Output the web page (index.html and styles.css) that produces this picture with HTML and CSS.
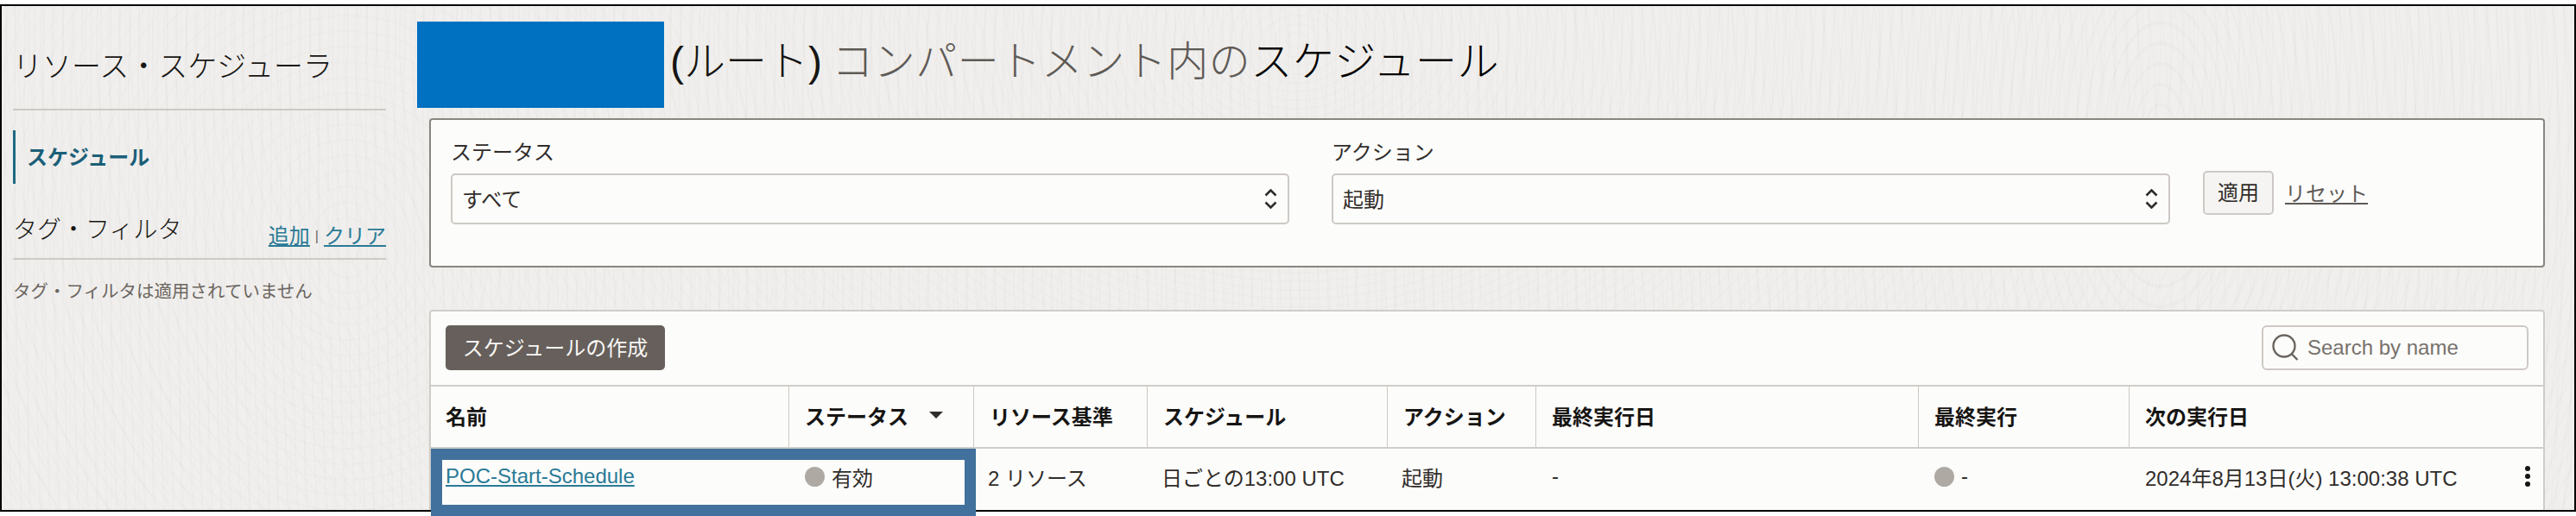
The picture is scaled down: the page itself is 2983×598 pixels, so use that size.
FILE: index.html
```html
<!DOCTYPE html>
<html lang="ja">
<head>
<meta charset="utf-8">
<title>スケジュール</title>
<link rel="stylesheet" href="styles.css">
</head>
<body>
<div class="page">
  <div class="frame">
    <aside class="sidebar">
      <h2 class="side-title">リソース・スケジューラ</h2>
      <nav class="side-nav"><a class="side-link">スケジュール</a></nav>
      <div class="tag-head">
        <h3 class="tag-title">タグ・フィルタ</h3>
        <div class="tag-links"><a class="link">追加</a><span class="sep">|</span><a class="link">クリア</a></div>
      </div>
      <p class="tag-note">タグ・フィルタは適用されていません</p>
    </aside>
    <main class="content">
      <h1 class="heading">
        <span class="redacted"></span>
        <span class="heading-text"><span class="h-dark">(ルート)</span> <span class="h-mid">コンパートメント内の</span><span class="h-black">スケジュール</span></span>
      </h1>
      <section class="filters">
        <div class="field">
          <label class="field-label">ステータス</label>
          <div class="select"><span class="select-value">すべて</span>
            <svg class="updown" width="15" height="23" viewBox="0 0 15 23"><path d="M1.5 7.5 7.5 1.5l6 6M1.5 15.5l6 6 6-6"/></svg>
          </div>
        </div>
        <div class="field">
          <label class="field-label">アクション</label>
          <div class="select"><span class="select-value">起動</span>
            <svg class="updown" width="15" height="23" viewBox="0 0 15 23"><path d="M1.5 7.5 7.5 1.5l6 6M1.5 15.5l6 6 6-6"/></svg>
          </div>
        </div>
        <div class="filter-actions">
          <button class="btn-apply">適用</button>
          <a class="reset">リセット</a>
        </div>
      </section>
      <section class="list">
        <div class="toolbar">
          <button class="btn-create">スケジュールの作成</button>
          <div class="search">
            <svg class="search-icon" width="32" height="32" viewBox="0 0 32 32"><circle cx="14" cy="14" r="12.5"/><path d="M23 23.5l6.5 6.5"/></svg>
            <input class="search-input" type="text" placeholder="Search by name">
          </div>
        </div>
        <table class="table">
          <colgroup>
            <col class="c1"><col class="c2"><col class="c3"><col class="c4"><col class="c5"><col class="c6"><col class="c7"><col class="c8">
          </colgroup>
          <thead>
            <tr>
              <th class="first">名前</th>
              <th><span class="th-sort">ステータス<span class="caret"></span></span></th>
              <th>リソース基準</th>
              <th>スケジュール</th>
              <th>アクション</th>
              <th>最終実行日</th>
              <th>最終実行</th>
              <th class="last">次の実行日</th>
            </tr>
          </thead>
          <tbody>
            <tr>
              <td class="first"><a class="name-link">POC-Start-Schedule</a></td>
              <td><span class="status"><span class="dot"></span>有効</span></td>
              <td class="tight">2 リソース</td>
              <td class="tight">日ごとの13:00 UTC</td>
              <td class="tight">起動</td>
              <td>-</td>
              <td><span class="status"><span class="dot"></span>-</span></td>
              <td class="last"><span class="next-run"><span>2024年8月13日(火) 13:00:38 UTC</span>
                <svg class="kebab" width="6" height="24" viewBox="0 0 6 24"><circle cx="3" cy="3" r="3"/><circle cx="3" cy="12" r="3"/><circle cx="3" cy="21" r="3"/></svg>
              </span></td>
            </tr>
          </tbody>
        </table>
      </section>
    </main>
  </div>
  <div class="callout"></div>
</div>
</body>
</html>
```
FILE: styles.css
```css
* { box-sizing: border-box; }
html, body { margin: 0; padding: 0; background: #fff; }
body {
  width: 2983px;
  height: 598px;
  overflow: hidden;
  font-family: "Liberation Sans", "Noto Sans CJK JP", sans-serif;
  font-size: 24px;
  color: #312d2a;
}
.page { position: relative; width: 2983px; height: 598px; padding-top: 5px; }
.frame {
  display: flex;
  width: 2983px;
  height: 588px;
  border: 2px solid #000;
  overflow: hidden;
  background-color: #f0efed;
  background-image:
    repeating-radial-gradient(ellipse 120px 260px at 2500px 160px, rgba(120,110,100,0) 0 9px, rgba(120,110,100,.028) 9px 11px),
    repeating-radial-gradient(ellipse 200px 240px at 400px 280px, rgba(120,110,100,0) 0 13px, rgba(120,110,100,.02) 13px 15px),
    repeating-radial-gradient(ellipse 260px 200px at 1500px 40px, rgba(120,110,100,0) 0 11px, rgba(120,110,100,.022) 11px 13px),
    repeating-linear-gradient(90deg, rgba(120,110,100,0) 0 14px, rgba(120,110,100,.012) 14px 16px);
}

/* Sidebar */
.sidebar { flex: none; width: 495px; padding: 50px 0 0 13px; }
.side-title {
  width: 432px;
  margin: 0;
  padding-bottom: 29px;
  border-bottom: 2px solid #cdc9c4;
  font-size: 34px;
  line-height: 40px;
  font-weight: 300;
  white-space: nowrap;
  color: #161513;
}
.side-nav { margin-top: 23px; }
.side-link {
  display: flex;
  align-items: center;
  height: 62px;
  padding: 0 0 4px 13px;
  border-left: 3px solid #1f6a82;
  font-size: 24px;
  font-weight: 700;
  color: #1b5f78;
}
.tag-head {
  display: flex;
  justify-content: space-between;
  align-items: flex-end;
  width: 432px;
  height: 56px;
  margin-top: 32px;
  padding-bottom: 9px;
  border-bottom: 2px solid #cdc9c4;
}
.tag-title {
  align-self: flex-start;
  margin: 0;
  font-size: 28px;
  line-height: 44px;
  font-weight: 300;
  color: #161513;
}
.tag-links { display: flex; align-items: center; line-height: 32px; }
.link { color: #2a7a96; text-decoration: underline; }
.sep { margin: 0 6px; font-size: 16px; color: #6b6560; }
.tag-note { margin: 22px 0 0; font-size: 20.5px; line-height: 30px; color: #6b6560; white-space: nowrap; }

/* Heading */
.content { flex: none; width: 2450px; padding-top: 18px; }
.heading {
  display: flex;
  align-items: center;
  height: 100px;
  margin: 0 0 0 -14px;
  font-size: 48px;
  font-weight: 300;
  white-space: nowrap;
}
.redacted { flex: none; width: 286px; height: 100px; margin-right: 7px; background: #0070c0; }
.heading-text { padding-bottom: 6px; line-height: 60px; }
.h-dark { color: #161513; }
.h-mid { margin-left: -2px; letter-spacing: .5px; color: #5f5a56; }
.h-black { letter-spacing: .5px; color: #000; }

/* Filter panel */
.filters {
  display: flex;
  align-items: flex-start;
  height: 173px;
  margin-top: 12px;
  padding: 22px 0 0 23px;
  background: #fcfcfb;
  border: 2px solid #8a8580;
  border-radius: 4px;
}
.field { flex: none; width: 971px; margin-right: 49px; }
.field:nth-child(2) { margin-right: 38px; }
.field-label { display: block; height: 40px; line-height: 32px; color: #312d2a; }
.select {
  display: flex;
  align-items: center;
  justify-content: space-between;
  height: 59px;
  padding: 0 12px 0 11px;
  background: #fcfcfb;
  border: 2px solid #cdc9c4;
  border-radius: 5px;
  color: #312d2a;
}
.select-value { margin-bottom: 3px; }
.updown { flex: none; }
.updown path { fill: none; stroke: #312d2a; stroke-width: 2.6; }
.filter-actions { display: flex; align-items: center; gap: 13px; margin-top: 37px; }
.btn-apply {
  width: 82px;
  height: 51px;
  padding: 0 0 4px;
  background: #f5f4f2;
  border: 2px solid #cdc9c4;
  border-radius: 5px;
  font: inherit;
  color: #312d2a;
}
.reset { margin-bottom: 2px; color: #5f5a56; text-decoration: underline; }

/* List panel */
.list {
  height: 300px;
  margin-top: 49px;
  background: #fcfcfb;
  border: 2px solid #d0ccc8;
  border-radius: 4px 4px 0 0;
}
.toolbar {
  display: flex;
  justify-content: space-between;
  align-items: flex-start;
  height: 85px;
  padding: 16px 17px 0;
}
.btn-create {
  width: 254px;
  height: 52px;
  padding: 0 0 4px;
  background: #665f5b;
  border: 0;
  border-radius: 5px;
  font: inherit;
  color: #f7f6f4;
}
.search {
  display: flex;
  align-items: center;
  width: 309px;
  height: 52px;
  padding-left: 10px;
  background: #fcfcfb;
  border: 2px solid #cdc9c4;
  border-radius: 6px;
}
.search-icon { flex: none; margin-right: 9px; }
.search-icon circle, .search-icon path { fill: none; stroke: #6b6560; stroke-width: 2.4; }
.search-input {
  flex: 1;
  min-width: 0;
  padding: 0;
  border: 0;
  outline: 0;
  background: transparent;
  font: inherit;
  color: #312d2a;
}
.search-input::placeholder { color: #77716c; opacity: 1; }

/* Table */
.table { width: 2446px; table-layout: fixed; border-collapse: separate; border-spacing: 0; }
.c1 { width: 415px; } .c2 { width: 214px; } .c3 { width: 201px; } .c4 { width: 278px; }
.c5 { width: 172px; } .c6 { width: 443px; } .c7 { width: 244px; } .c8 { width: 479px; }
th, td { padding: 0 0 0 18px; text-align: left; white-space: nowrap; }
th {
  height: 74px;
  padding-bottom: 4px;
  border-top: 2px solid #d0ccc8;
  border-bottom: 2px solid #d0ccc8;
  border-right: 1px solid #cdc9c4;
  font-weight: 700;
  color: #161513;
}
th.last { border-right: 0; }
th.first, td.first { padding-left: 17px; }
td { height: 66px; padding-bottom: 2px; color: #312d2a; }
td.tight { padding-left: 16px; }
td.last { padding-right: 15px; }
.th-sort { display: flex; align-items: center; }
.caret {
  margin-left: 24px;
  border-left: 8px solid transparent;
  border-right: 8px solid transparent;
  border-top: 8px solid #312d2a;
}
.name-link { color: #2a7a96; text-decoration: underline; }
.status { display: flex; align-items: center; gap: 8px; }
.dot { flex: none; width: 23px; height: 23px; border-radius: 50%; background: #aea9a3; }
.next-run { display: flex; align-items: center; justify-content: space-between; }
.kebab { flex: none; }
.kebab circle { fill: #161513; }

/* Annotation drawn over the first row */
.callout {
  position: absolute;
  left: 499px;
  top: 520px;
  width: 631px;
  height: 78px;
  border: 13px solid #41719c;
}
```
